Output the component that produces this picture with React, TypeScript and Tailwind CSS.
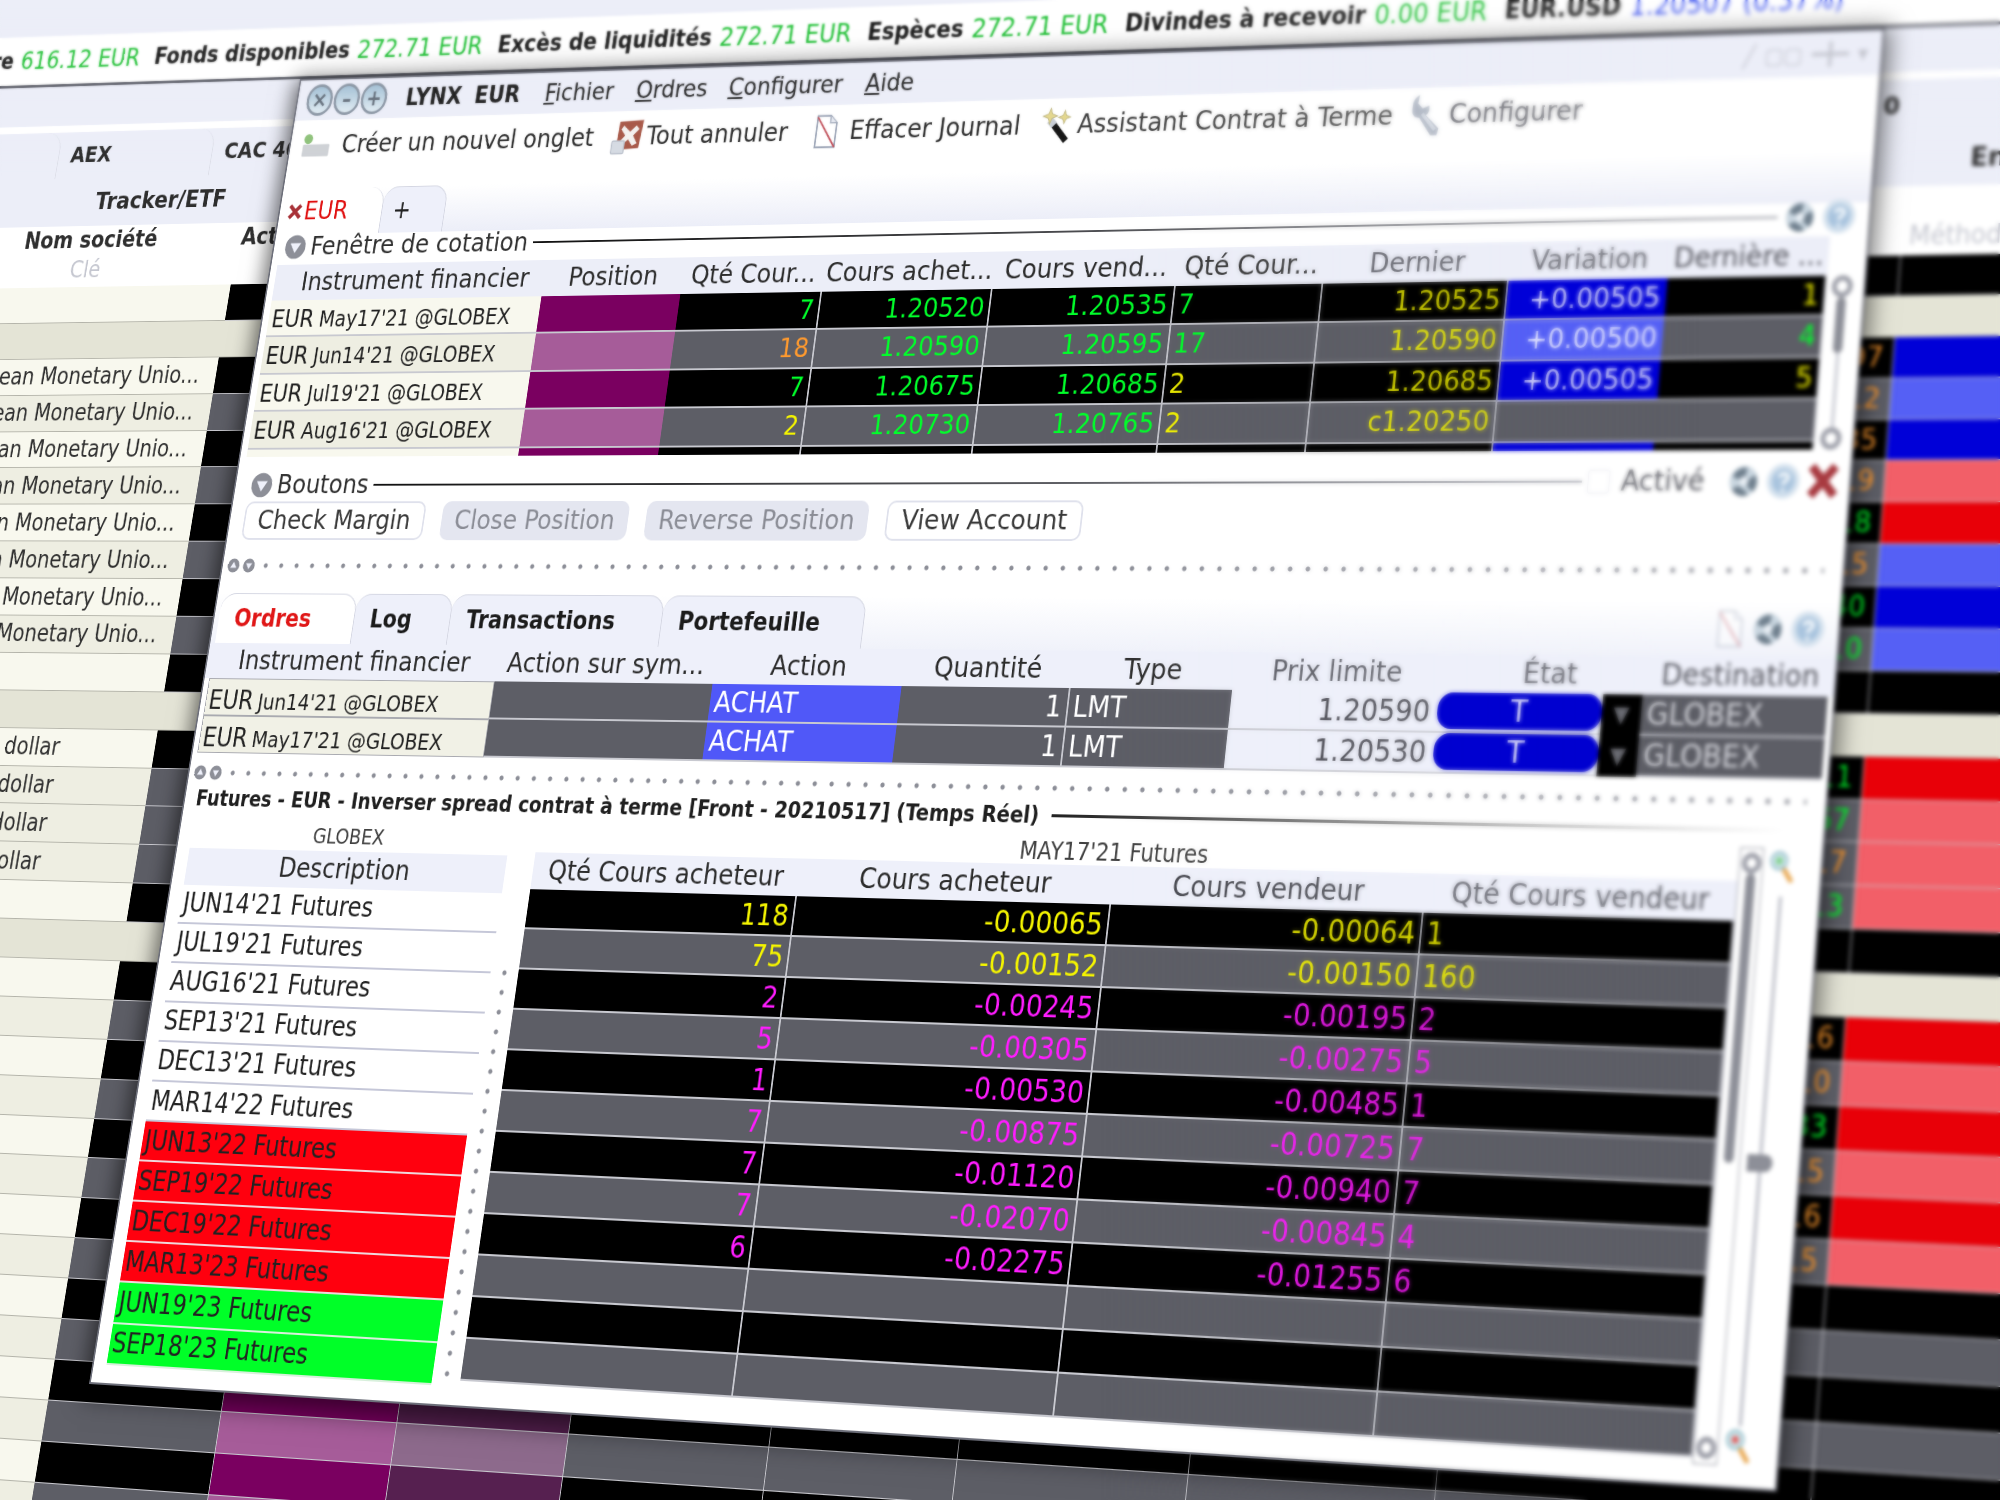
import type { ReactNode } from "react";

// the whole desktop sits on one tilted plane; these are the screen corners of the front window
const W = 1900;
const H = 1400;
const corners = [
  [300, 79],
  [1885, 28],
  [1777, 1492],
  [89, 1384],
];

function planeTransform() {
  const [[x0, y0], [x1, y1], [x2, y2], [x3, y3]] = corners;
  const dx1 = x1 - x2;
  const dx2 = x3 - x2;
  const sx = x0 - x1 + x2 - x3;
  const dy1 = y1 - y2;
  const dy2 = y3 - y2;
  const sy = y0 - y1 + y2 - y3;
  const det = dx1 * dy2 - dx2 * dy1;
  const g = (sx * dy2 - dx2 * sy) / det;
  const h = (dx1 * sy - sx * dy1) / det;
  const a = x1 - x0 + g * x1;
  const b = x3 - x0 + h * x3;
  const d = y1 - y0 + g * y1;
  const e = y3 - y0 + h * y3;
  return `matrix3d(${a / W},${d / W},0,${g / W},${b / H},${e / H},0,${h / H},0,0,1,0,${x0},${y0},0,1)`;
}

const GREEN = "text-[#00ff2a]";
const YELLOW = "text-[#f4f400]";
const ORANGE = "text-[#ff9a2e]";
const MAGENTA = "text-[#ff1cff]";
const WHITE = "text-white";

/* ---------- small drawings ---------- */

function Chevron({ small }: { small?: boolean }) {
  return (
    <svg viewBox="0 0 20 20" className={small ? "w-4 h-5" : "w-7 h-8"}>
      <circle cx="10" cy="10" r="9.5" fill="#8d8f98" />
      <path d="M5 7h10l-5 8z" fill="#eef0fa" />
    </svg>
  );
}

function ChevronUp() {
  return (
    <svg viewBox="0 0 20 20" className="w-4 h-5">
      <circle cx="10" cy="10" r="9.5" fill="#8d8f98" />
      <path d="M5 13h10l-5-8z" fill="#eef0fa" />
    </svg>
  );
}

function WinButton({ mark }: { mark: string }) {
  return (
    <div className="w-[34px] h-[36px] rounded-full bg-gradient-to-b from-[#a6c2d6] to-[#e0ebf2] border-[3px] border-[#8a95a3] flex items-center justify-center text-[#66707c] text-[24px] font-bold leading-none">
      {mark}
    </div>
  );
}

function Gear() {
  return (
    <svg viewBox="0 0 24 24" className="w-9 h-10">
      <circle cx="12" cy="12" r="10" fill="#c9d6e0" />
      <path d="M4 9a9 9 0 0 1 10-6l-1 6a4 4 0 0 0-4 2zM20 8a9 9 0 0 1-1 11l-5-4a4 4 0 0 0 1-4zM16 21a9 9 0 0 1-12-4l5-2a4 4 0 0 0 3 2z" fill="#70808e" />
      <circle cx="12" cy="12" r="3" fill="#e8eef4" />
    </svg>
  );
}

function HelpBall() {
  return (
    <svg viewBox="0 0 24 24" className="w-9 h-10">
      <circle cx="12" cy="12" r="11.5" fill="#d5e2ee" />
      <circle cx="12" cy="12" r="8" fill="#a9c4de" />
      <path d="M9 9.5c1-3 6.5-3 6.5 0 0 2.5-3.5 2-3.5 5" stroke="#f2f7fb" strokeWidth="2.4" fill="none" />
      <circle cx="12" cy="18" r="1.4" fill="#f2f7fb" />
    </svg>
  );
}

function DocStrike({ faint }: { faint?: boolean }) {
  return (
    <svg viewBox="0 0 24 28" className={`w-8 h-10 ${faint ? "opacity-40" : ""}`}>
      <path d="M3 1h12l6 6v20H3z" fill="#fff" stroke="#9aa3b5" strokeWidth="1.5" />
      <path d="M15 1v6h6" fill="#e8ebf2" stroke="#9aa3b5" strokeWidth="1" />
      <path d="M3 2l18 25" stroke="#c0505a" strokeWidth="1.5" />
    </svg>
  );
}

function CancelAll() {
  return (
    <svg viewBox="0 0 28 28" className="w-10 h-10">
      <path d="M6 2l21-1-2 22-20 1z" fill="#a85a4a" />
      <path d="M10 5l6 5 5-5 3 3-5 5 4 6-4 2-4-5-6 5-2-3 5-5-4-5z" fill="#f4f2f0" />
      <rect x="1" y="17" width="11" height="10" rx="1" fill="#d6dbe3" stroke="#b9bfca" />
    </svg>
  );
}

function NewTab() {
  return (
    <svg viewBox="0 0 32 24" className="w-10 h-8">
      <rect x="2" y="11" width="28" height="11" rx="1" fill="#cfd2d6" />
      <circle cx="7" cy="6" r="4.5" fill="#8fc27c" />
    </svg>
  );
}

function Wand() {
  return (
    <svg viewBox="0 0 28 28" className="w-10 h-11">
      <path d="M11 13l12 13" stroke="#161616" strokeWidth="5" />
      <path d="M8 10l4 4" stroke="#c9ced6" strokeWidth="6" />
      <path d="M8 1l1.6 4.4L14 7l-4.4 1.6L8 13 6.4 8.6 2 7l4.4-1.6zM20 3l1.4 3.6L25 8l-3.6 1.4L20 13l-1.4-3.6L15 8l3.6-1.4z" fill="#e5d88e" stroke="#b9b07a" strokeWidth="0.6" />
    </svg>
  );
}

function WrenchIcon() {
  return (
    <svg viewBox="0 0 28 32" className="w-10 h-12 shrink-0">
      <path d="M7 1l-1 6 4 4 5-2c1 4 0 6-2 7l11 10-1 5-5 0-10-13c-4 0-7-3-6-9 0-4 2-7 5-8z" fill="#b3bac6" />
      <path d="M10 15l11 12" stroke="#d9dee6" strokeWidth="2.5" />
    </svg>
  );
}

function Magnifier({ tint }: { tint: string }) {
  return (
    <svg viewBox="0 0 24 28" className="w-7 h-9 shrink-0">
      <path d="M13 15l8 11" stroke="#e8a64e" strokeWidth="4" />
      <circle cx="9" cy="9" r="7" fill="#cfe6ea" stroke="#9fc4cf" strokeWidth="2" />
      <circle cx="9" cy="9" r="3" fill={tint} />
    </svg>
  );
}

function Dots() {
  return <div className="flex-1 h-[8px] bg-[radial-gradient(circle,#8d8f98_2px,transparent_3px)] bg-[length:20px_8px]" />;
}

/* ---------- background window ---------- */

const bgRows: { tone: "black" | "gray" | "section"; label?: string; usd?: boolean; num?: string; numClass?: string; fill?: string }[] = [
  { tone: "black" },
  { tone: "section" },
  { tone: "black", label: "European Monetary Unio...", num: "97", numClass: ORANGE, fill: "bg-[#0000d8]" },
  { tone: "gray", label: "European Monetary Unio...", num: "12", numClass: ORANGE, fill: "bg-[#5560f5]" },
  { tone: "black", label: "European Monetary Unio...", num: "35", numClass: ORANGE, fill: "bg-[#0000d8]" },
  { tone: "gray", label: "European Monetary Unio...", num: "19", numClass: ORANGE, fill: "bg-[#f25f68]" },
  { tone: "black", label: "European Monetary Unio...", num: "18", numClass: GREEN, fill: "bg-[#e80008]" },
  { tone: "gray", label: "European Monetary Unio...", num: "15", numClass: ORANGE, fill: "bg-[#5560f5]" },
  { tone: "black", label: "European Monetary Unio...", num: "40", numClass: GREEN, fill: "bg-[#0000d8]" },
  { tone: "gray", label: "European Monetary Unio...", num: "10", numClass: GREEN, fill: "bg-[#5560f5]" },
  { tone: "black" },
  { tone: "section" },
  { tone: "black", label: "United States dollar", usd: true, num: "11", numClass: GREEN, fill: "bg-[#e80008]" },
  { tone: "gray", label: "United States dollar", usd: true, num: "67", numClass: GREEN, fill: "bg-[#f25f68]" },
  { tone: "gray", label: "United States dollar", usd: true, num: "17", numClass: ORANGE, fill: "bg-[#f25f68]" },
  { tone: "gray", label: "United States dollar", usd: true, num: "13", numClass: GREEN, fill: "bg-[#f25f68]" },
  { tone: "black" },
  { tone: "section" },
  { tone: "black", num: "16", numClass: ORANGE, fill: "bg-[#e80008]" },
  { tone: "gray", num: "10", numClass: ORANGE, fill: "bg-[#f25f68]" },
  { tone: "black", num: "33", numClass: GREEN, fill: "bg-[#e80008]" },
  { tone: "gray", num: "15", numClass: ORANGE, fill: "bg-[#f25f68]" },
  { tone: "black", num: "16", numClass: ORANGE, fill: "bg-[#e80008]" },
  { tone: "gray", num: "15", numClass: ORANGE, fill: "bg-[#f25f68]" },
  { tone: "black" },
  { tone: "gray" },
  { tone: "black" },
  { tone: "gray" },
  { tone: "black" },
  { tone: "gray" },
  { tone: "black" },
  { tone: "gray" },
];

function BgRow({ row }: { row: (typeof bgRows)[number] }) {
  if (row.tone === "section") {
    return <div className="h-[40.9px] bg-[#e4e4d6] border-b border-[#b8b8ae]" />;
  }
  const dark = row.tone === "black";
  const base = dark ? "bg-black" : "bg-[#5d5e66]";
  const cell = `h-full border-r border-b border-[#c9c9cf] ${base}`;
  return (
    <div className="h-[40.9px] flex">
      <div className={`w-[452px] h-full ${row.usd ? "pl-[69px]" : "pl-[84px]"} flex items-center text-[26px] whitespace-nowrap overflow-hidden text-[#303030] border-b border-[#b4b4aa] ${dark ? "bg-[#f8f8ee]" : "bg-[#eeeee2]"}`}>
        {row.label}
      </div>
      <div className={`w-[218px] ${cell}`} />
      <div className={`w-[215px] h-full border-r border-b border-[#c9c9cf] ${dark ? "bg-[#7a0060]" : "bg-[#a65c99]"}`} />
      <div className={`w-[205px] h-full border-r border-b border-[#c9c9cf] ${dark ? "bg-[#562050]" : "bg-[#8d6a8c]"}`} />
      <div className={`w-[233px] ${cell}`} />
      <div className={`w-[213px] ${cell}`} />
      <div className={`w-[254px] ${cell}`} />
      <div className={`w-[263px] ${cell}`} />
      <div className={`w-[382px] ${cell} flex items-center justify-end pr-[10px] text-[28px] ${row.numClass ?? ""}`}>{row.num}</div>
      <div className={`w-[700px] h-full border-b border-[#c9c9cf] ${row.fill ?? base}`} />
    </div>
  );
}

function StatusPair({ label, value, valueClass = "text-[#20c035]" }: { label: string; value: string; valueClass?: string }) {
  return (
    <div className="flex items-center gap-[10px] whitespace-nowrap">
      <span className="font-bold text-[26px] text-[#202020]">{label}</span>
      <span className={`text-[28px] ${valueClass}`}>{value}</span>
    </div>
  );
}

function BackgroundWindow() {
  return (
    <div className="absolute left-[-500px] top-[-260px] w-[3200px] bg-[#eceef8]">
      <div className="h-[200px]" />
      {/* account line */}
      <div className="h-[60px] bg-white flex items-center gap-[20px] pl-[33px] border-b-[3px] border-[#5a5c66]">
        <StatusPair label="Titre" value="616.12 EUR" />
        <StatusPair label="Fonds disponibles" value="272.71 EUR" />
        <StatusPair label="Excès de liquidités" value="272.71 EUR" />
        <StatusPair label="Espèces" value="272.71 EUR" />
        <StatusPair label="Divindes à recevoir" value="0.00 EUR" />
        <StatusPair label="EUR.USD" value="1.20507 (0.37%)" valueClass="text-[#3f55f0]" />
      </div>
      <div className="h-[46px] bg-[#eceef8]" />
      {/* tab rows */}
      <div className="h-[8px] bg-white" />
      <div className="h-[54px] flex text-[25px] font-bold text-[#2e2e2e] items-end">
        <div className="w-[189px] h-full border-r border-[#dcdee8] rounded-tr-[20px]" />
        <div className="w-[209px] h-full border-r border-[#dcdee8] rounded-tr-[20px] flex items-center pl-[16px]">AEX</div>
        <div className="w-[1450px] h-full flex items-center pl-[16px]">CAC 40</div>
        <div className="h-full flex items-center pl-[557px]">0</div>
      </div>
      <div className="h-[56px] flex text-[27px] font-bold text-[#2e2e2e] items-center border-b border-white">
        <div className="w-[250px]" />
        <div>Tracker/ETF</div>
        <div className="ml-[2074px]">En</div>
      </div>
      {/* column head */}
      <div className="h-[30px] bg-white flex items-center text-[26px] font-bold text-[#303030] whitespace-nowrap">
        <div className="w-[162px]" />
        <div className="w-[294px]">Nom société</div>
        <div>Act</div>
      </div>
      <div className="h-[39px] bg-white flex items-center text-[26px] text-[#c5c7d0]">
        <div className="w-[231px]" />
        <div className="w-[2211px]">Clé</div>
        <div>Méthode</div>
      </div>
      <div>
        {bgRows.map((row, i) => (
          <BgRow key={i} row={row} />
        ))}
      </div>
    </div>
  );
}

/* ---------- front window: quote table ---------- */

type QuoteCell = { text: string; color?: string };

const quotes: {
  name: [string, string];
  qty: QuoteCell;
  bid: string;
  ask: string;
  askQty: QuoteCell;
  last: string;
  change: string;
  lastQty: QuoteCell;
}[] = [
  { name: ["EUR", "May17'21 @GLOBEX"], qty: { text: "7", color: GREEN }, bid: "1.20520", ask: "1.20535", askQty: { text: "7", color: GREEN }, last: "1.20525", change: "+0.00505", lastQty: { text: "1", color: YELLOW } },
  { name: ["EUR", "Jun14'21 @GLOBEX"], qty: { text: "18", color: ORANGE }, bid: "1.20590", ask: "1.20595", askQty: { text: "17", color: GREEN }, last: "1.20590", change: "+0.00500", lastQty: { text: "4", color: GREEN } },
  { name: ["EUR", "Jul19'21 @GLOBEX"], qty: { text: "7", color: GREEN }, bid: "1.20675", ask: "1.20685", askQty: { text: "2", color: YELLOW }, last: "1.20685", change: "+0.00505", lastQty: { text: "5", color: YELLOW } },
  { name: ["EUR", "Aug16'21 @GLOBEX"], qty: { text: "2", color: YELLOW }, bid: "1.20730", ask: "1.20765", askQty: { text: "2", color: YELLOW }, last: "c1.20250", change: "", lastQty: { text: "" } },
  { name: ["EUR", "Sep13'21 @GLOBEX"], qty: { text: "5", color: YELLOW }, bid: "1.20810", ask: "1.20825", askQty: { text: "5", color: YELLOW }, last: "1.20830", change: "+0.00500", lastQty: { text: "1", color: YELLOW } },
];

function Cell({
  w,
  dark,
  right,
  className = "",
  children,
}: {
  w: string;
  dark: boolean;
  right?: boolean;
  className?: string;
  children?: ReactNode;
}) {
  return (
    <div
      className={`${w} h-full flex items-center px-[5px] border-r-2 border-b-2 border-[#c8c9d0] ${dark ? "bg-black" : "bg-[#5d5e66]"} ${right ? "justify-end" : ""} ${className}`}
    >
      {children}
    </div>
  );
}

function SectionHead({ title, children }: { title: string; children?: ReactNode }) {
  return (
    <div className="flex items-center gap-[6px] text-[29px] text-[#303030]">
      <Chevron />
      <span>{title}</span>
      <div className="flex-1 h-[2px] bg-gradient-to-r from-[#111] to-[#9a9ca6]" />
      {children}
    </div>
  );
}

function QuoteTable() {
  return (
    <div>
      <div className="h-[34px] pl-[14px] pr-[14px] flex items-center">
        <div className="flex-1 mt-[-6px]">
          <SectionHead title="Fenêtre de cotation">
            <Gear />
            <HelpBall />
          </SectionHead>
        </div>
      </div>
      <div className="flex pl-[8px]">
        <div className="w-[1848px]">
          <div className="h-[40px] flex items-center bg-[#eceef8] text-[29px] text-[#2c2c2c] text-center whitespace-nowrap">
            <div className="w-[350px] pl-[16px]">Instrument financier</div>
            <div className="w-[175px]">Position</div>
            <div className="w-[175px]">Qté Cour...</div>
            <div className="w-[206px]">Cours achet...</div>
            <div className="w-[216px]">Cours vend...</div>
            <div className="w-[170px]">Qté Cour...</div>
            <div className="w-[209px] text-[#55565e]">Dernier</div>
            <div className="w-[175px] text-[#55565e]">Variation</div>
            <div className="w-[172px] text-[#55565e]">Dernière ...</div>
          </div>
          <div className="h-[174px] overflow-hidden text-[29px]">
            {quotes.map((q, i) => {
              const dark = i % 2 === 0;
              return (
                <div key={i} className="h-[41.4px] flex">
                  <div className={`w-[350px] h-full flex items-baseline pt-[1px] gap-[7px] pl-[4px] text-[#222] border-b-2 border-[#c8c9d0] whitespace-nowrap ${dark ? "bg-[#f8f8ee]" : "bg-[#eeeee2]"}`}>
                    <span className="text-[27px]">{q.name[0]}</span>
                    <span className="text-[24px]">{q.name[1]}</span>
                  </div>
                  <div className={`w-[175px] h-full border-b-2 border-[#c8c9d0] ${dark ? "bg-[#7a0060]" : "bg-[#a65c99]"}`} />
                  <Cell w="w-[175px]" dark={dark} right className={q.qty.color}>{q.qty.text}</Cell>
                  <Cell w="w-[206px]" dark={dark} right className={GREEN}>{q.bid}</Cell>
                  <Cell w="w-[216px]" dark={dark} right className={GREEN}>{q.ask}</Cell>
                  <Cell w="w-[170px]" dark={dark} className={q.askQty.color}>{q.askQty.text}</Cell>
                  <Cell w="w-[209px]" dark={dark} right className={YELLOW}>{q.last}</Cell>
                  <div className={`w-[175px] h-full flex items-center justify-end pr-[6px] ${WHITE} border-b-2 border-[#c8c9d0] ${q.change === "" ? "bg-[#5d5e66]" : dark ? "bg-[#0000d8]" : "bg-[#5560f5]"}`}>
                    {q.change}
                  </div>
                  <Cell w="w-[172px]" dark={dark} right className={q.lastQty.color}>{q.lastQty.text}</Cell>
                </div>
              );
            })}
          </div>
        </div>
        <div className="w-[34px] flex flex-col items-center pt-[40px] h-[214px]">
          <div className="w-[22px] h-[22px] rounded-full border-[5px] border-[#9a9ca6]" />
          <div className="w-[10px] h-[56px] bg-[#8d8f98] rounded-full" />
          <div className="w-[3px] flex-1 bg-[#c5c7d0]" />
          <div className="w-[22px] h-[22px] rounded-full border-[5px] border-[#9a9ca6]" />
        </div>
      </div>
    </div>
  );
}

/* ---------- front window: orders ---------- */

const orders = [
  { name: "Jun14'21 @GLOBEX", price: "1.20590" },
  { name: "May17'21 @GLOBEX", price: "1.20530" },
];

function OrderTabs() {
  const tabs = [
    { label: "Ordres", w: "w-[175px]", active: true },
    { label: "Log", w: "w-[122px]" },
    { label: "Transactions", w: "w-[263px]" },
    { label: "Portefeuille", w: "w-[244px]" },
  ];
  return (
    <div className="h-[54px] flex pl-[6px] bg-gradient-to-b from-white to-[#f0f2fa] text-[26px] font-bold">
      {tabs.map((t) => (
        <div
          key={t.label}
          className={`${t.w} h-full flex items-center pl-[20px] rounded-t-[18px] border-t border-r border-[#d4d6e2] ${t.active ? "bg-white text-[#e01818]" : "bg-[#eef0fa] text-[#1c1c1c]"}`}
        >
          {t.label}
        </div>
      ))}
      <div className="flex-1 flex items-center justify-end gap-[6px] pr-[14px]">
        <DocStrike faint />
        <Gear />
        <HelpBall />
      </div>
    </div>
  );
}

function OrdersTable() {
  return (
    <div>
      <OrderTabs />
      <div className="h-[38px] flex items-center bg-[#eef0fa] text-[29px] text-[#2c2c2c] text-center pl-[6px] whitespace-nowrap">
        <div className="w-[364px]">Instrument financier</div>
        <div className="w-[268px]">Action sur sym...</div>
        <div className="w-[226px]">Action</div>
        <div className="w-[197px]">Quantité</div>
        <div className="w-[184px]">Type</div>
        <div className="w-[230px] text-[#55565e]">Prix limite</div>
        <div className="w-[178px] pl-[60px] text-[#55565e]">État</div>
        <div className="w-[237px] pl-[50px] text-[#55565e]">Destination</div>
      </div>
      {orders.map((o) => (
        <div key={o.name} className="h-[40px] flex pl-[6px] text-[30px] text-white">
          <div className="w-[364px] h-full flex items-baseline gap-[6px] pt-[2px] pl-[3px] bg-[#f1f1e6] text-[#222] border border-[#a9aab0] whitespace-nowrap">
            <span className="text-[28px]">EUR</span>
            <span className="text-[23.5px]">{o.name}</span>
          </div>
          <div className="w-[268px] h-full bg-[#5d5e66] border-b-2 border-[#c8c9d0]" />
          <div className="w-[226px] h-full flex items-center pl-[5px] bg-[#5058f8] border-b-2 border-[#c8c9d0]">ACHAT</div>
          <div className="w-[197px] h-full flex items-center justify-end pr-[6px] bg-[#5d5e66] border-r-2 border-b-2 border-[#c8c9d0]">1</div>
          <div className="w-[184px] h-full flex items-center pl-[5px] bg-[#5d5e66] border-b-2 border-[#c8c9d0]">LMT</div>
          <div className="w-[230px] h-full flex items-center justify-end pr-[8px] bg-[#eef0fa] text-[#404048] border-b-2 border-[#c8c9d0]">{o.price}</div>
          <div className="w-[178px] h-full bg-[#eef0fa] border-b-2 border-[#c8c9d0]">
            <div className="h-[36px] flex items-center justify-center bg-[#0000d0] rounded-[16px]">T</div>
          </div>
          <div className="w-[42px] h-full flex items-center justify-center bg-black text-[#6a6b72] text-[22px]">▼</div>
          <div className="w-[195px] h-full flex items-center pl-[6px] bg-[#5d5e66] text-[#d2d3d9] border-b-2 border-[#c8c9d0]">GLOBEX</div>
        </div>
      ))}
    </div>
  );
}

/* ---------- front window: spread matrix ---------- */

const months: { name: string; bg: string }[] = [
  { name: "JUN14'21 Futures", bg: "bg-white border-[#c5c7d8]" },
  { name: "JUL19'21 Futures", bg: "bg-white border-[#c5c7d8]" },
  { name: "AUG16'21 Futures", bg: "bg-white border-[#c5c7d8]" },
  { name: "SEP13'21 Futures", bg: "bg-white border-[#c5c7d8]" },
  { name: "DEC13'21 Futures", bg: "bg-white border-[#c5c7d8]" },
  { name: "MAR14'22 Futures", bg: "bg-white border-[#c5c7d8]" },
  { name: "JUN13'22 Futures", bg: "bg-[#ff000e] border-[#f0d8dc]" },
  { name: "SEP19'22 Futures", bg: "bg-[#ff000e] border-[#f0d8dc]" },
  { name: "DEC19'22 Futures", bg: "bg-[#ff000e] border-[#f0d8dc]" },
  { name: "MAR13'23 Futures", bg: "bg-[#ff000e] border-[#f0d8dc]" },
  { name: "JUN19'23 Futures", bg: "bg-[#00ff28] border-[#d8f0dc]" },
  { name: "SEP18'23 Futures", bg: "bg-[#00ff28] border-[#d8f0dc]" },
];

const spreads: string[][] = [
  ["118", "-0.00065", "-0.00064", "1"],
  ["75", "-0.00152", "-0.00150", "160"],
  ["2", "-0.00245", "-0.00195", "2"],
  ["5", "-0.00305", "-0.00275", "5"],
  ["1", "-0.00530", "-0.00485", "1"],
  ["7", "-0.00875", "-0.00725", "7"],
  ["7", "-0.01120", "-0.00940", "7"],
  ["7", "-0.02070", "-0.00845", "4"],
  ["6", "-0.02275", "-0.01255", "6"],
  ["", "", "", ""],
  ["", "", "", ""],
  ["", "", "", ""],
];

function SpreadMatrix() {
  return (
    <div>
      <div className="h-[30px] flex items-center gap-[14px] pl-[14px] text-[22.6px] font-bold text-[#202020] whitespace-nowrap">
        <span>Futures - EUR - Inverser spread contrat à terme [Front - 20210517] (Temps Réel)</span>
        <div className="flex-1 h-[3px] mr-[40px] bg-gradient-to-r from-[#222] via-[#888] to-white" />
      </div>
      <div className="flex pl-[16px] mt-[7px]">
        {/* month list */}
        <div className="w-[401px]">
          <div className="h-[30px] flex items-center pl-[155px] text-[22px] text-[#404040]">GLOBEX</div>
          <div className="h-[39px] flex items-center justify-center bg-[#eef0fa] text-[29px] text-[#2c2c2c]">Description</div>
          {months.map((m) => (
            <div key={m.name} className={`h-[41.1px] flex items-center pl-[3px] border-b-2 text-[28px] text-[#222] whitespace-nowrap ${m.bg}`}>
              {m.name}
            </div>
          ))}
        </div>
        {/* splitter */}
        <div className="w-[34px] pt-[140px] flex justify-center">
          <div className="w-[8px] h-[420px] bg-[radial-gradient(circle,#8d8f98_2px,transparent_3px)] bg-[length:8px_20px]" />
        </div>
        {/* matrix */}
        <div className="w-[1360px]">
          <div className="h-[26px] flex items-center justify-center text-[24px] text-[#404040]">MAY17'21 Futures</div>
          <div className="h-[38px] flex items-center bg-[#eef0fa] text-[29px] text-[#2c2c2c] text-center whitespace-nowrap">
            <div className="w-[321px]">Qté Cours acheteur</div>
            <div className="w-[363px]">Cours acheteur</div>
            <div className="w-[346px] text-[#44454c]">Cours vendeur</div>
            <div className="w-[330px] text-[#55565e]">Qté Cours vendeur</div>
          </div>
          {spreads.map((row, i) => {
            const dark = i % 2 === 0;
            const color = i < 2 ? YELLOW : MAGENTA;
            return (
              <div key={i} className={`h-[41px] flex text-[30px] ${color}`}>
                <Cell w="w-[321px]" dark={dark} right>{row[0]}</Cell>
                <Cell w="w-[363px]" dark={dark} right>{row[1]}</Cell>
                <Cell w="w-[346px]" dark={dark} right>{row[2]}</Cell>
                <Cell w="w-[330px]" dark={dark}>{row[3]}</Cell>
              </div>
            );
          })}
        </div>
        {/* scroll + zoom strip */}
        <div className="w-[25px] mt-[-6px] border border-[#9a9ca6] flex flex-col items-center">
          <div className="w-[20px] h-[20px] mt-[4px] rounded-full border-[5px] border-[#9a9ca6]" />
          <div className="w-[10px] h-[270px] bg-[#8d8f98] rounded-full" />
          <div className="flex-1" />
          <div className="w-[20px] h-[20px] mb-[4px] rounded-full border-[5px] border-[#9a9ca6]" />
        </div>
        <div className="w-[40px] mt-[-6px] flex flex-col items-center">
          <Magnifier tint="#7fd08a" />
          <div className="w-[3px] h-[240px] mt-[10px] bg-[#b8bac4]" />
          <div className="w-[26px] h-[16px] bg-[#8d8f98] rounded-r-full" />
          <div className="w-[3px] flex-1 bg-[#b8bac4]" />
          <Magnifier tint="#e06060" />
        </div>
      </div>
    </div>
  );
}

/* ---------- front window ---------- */

function FrontWindow() {
  return (
    <div className="absolute left-0 top-0 w-[1900px] h-[1400px] bg-white border-2 border-[#6d6f7a] shadow-[0_6px_24px_6px_rgba(0,0,0,0.55)] overflow-hidden text-[#222]">
      {/* title bar */}
      <div className="h-[46px] bg-[#eceef8] flex items-center text-[27px] whitespace-nowrap">
        <div className="flex gap-[2px] pl-[12px] w-[143px]">
          <WinButton mark="×" />
          <WinButton mark="–" />
          <WinButton mark="+" />
        </div>
        <span className="font-bold text-[26px] w-[90px]">LYNX</span>
        <span className="font-bold text-[26px] w-[91px]">EUR</span>
        <span className="w-[117px]"><u>F</u>ichier</span>
        <span className="w-[117px]"><u>O</u>rdres</span>
        <span className="w-[170px]"><u>C</u>onfigurer</span>
        <span><u>A</u>ide</span>
        <div className="flex-1 flex justify-end items-center gap-[10px] pr-[14px] text-[#c3c5ce] text-[22px]">
          <span>╱</span>
          <span>▢▢</span>
          <span>━╋━</span>
          <span>▾</span>
        </div>
      </div>
      {/* toolbar */}
      <div className="h-[58px] bg-white flex items-center text-[28.5px] text-[#2a2a2a] whitespace-nowrap">
        <div className="w-[418px] pl-[14px] flex items-center gap-[14px]"><NewTab /><span>Créer un nouvel onglet</span></div>
        <div className="w-[253px] flex items-center gap-[4px]"><CancelAll /><span>Tout annuler</span></div>
        <div className="w-[276px] flex items-center gap-[13px]"><DocStrike /><span>Effacer Journal</span></div>
        <div className="w-[432px] flex items-center gap-[5px]"><Wand /><span className="text-[#3a3a3a]">Assistant Contrat à Terme</span></div>
        <div className="flex items-center gap-[5px] text-[#55565e]"><WrenchIcon /><span>Configurer</span></div>
      </div>
      <div className="h-[20px] bg-white" />
      {/* workspace tabs */}
      <div className="h-[52px] flex bg-gradient-to-b from-white to-[#eceef8] text-[28px]">
        <div className="w-[135px] h-full flex items-center gap-[2px] pl-[10px] bg-white rounded-tr-[18px] border-r border-[#d4d6e2] text-[#e01010]">
          <svg viewBox="0 0 20 20" className="w-[20px] h-[24px]">
            <path d="M3 3l14 14M17 3L3 17" stroke="#a83238" strokeWidth="4.5" />
          </svg>
          EUR
        </div>
        <div className="w-[82px] h-full flex items-center pl-[14px] rounded-t-[18px] border-t border-r border-[#d4d6e2] bg-[#eef0fa]">+</div>
      </div>
      <QuoteTable />
      {/* buttons pane */}
      <div className="pt-[9px] pr-[10px] pl-[20px]">
        <SectionHead title="Boutons">
          <div className="w-[24px] h-[24px] border border-[#e5e6ee] rounded-[3px]" />
          <span className="text-[#55565e] ml-[6px] mr-[18px]">Activé</span>
          <Gear />
          <HelpBall />
          <svg viewBox="0 0 20 20" className="w-9 h-10">
            <path d="M3 2l14 16M17 2L3 18" stroke="#a83a40" strokeWidth="5" />
          </svg>
        </SectionHead>
      </div>
      <div className="flex gap-[22px] pl-[18px] mt-[-4px] text-[29px] whitespace-nowrap">
        <div className="h-[42px] px-[16px] flex items-center bg-white border-2 border-[#dfe1ec] rounded-[10px] text-[#3a3a3a]">Check Margin</div>
        <div className="h-[42px] px-[16px] flex items-center bg-[#e4e6f0] rounded-[10px] text-[#8b8d96]">Close Position</div>
        <div className="h-[42px] px-[16px] flex items-center bg-[#e4e6f0] rounded-[10px] text-[#8b8d96]">Reverse Position</div>
        <div className="h-[42px] px-[16px] flex items-center bg-white border-2 border-[#dfe1ec] rounded-[10px] text-[#3a3a3a]">View Account</div>
      </div>
      <div className="h-[32px] mt-[12px] mb-[14px] flex items-center gap-[4px] pl-[6px] pr-[20px]">
        <ChevronUp />
        <Chevron small />
        <Dots />
      </div>
      <OrdersTable />
      <div className="h-[26px] mt-[8px] flex items-center gap-[4px] pl-[6px] pr-[20px]">
        <ChevronUp />
        <Chevron small />
        <Dots />
      </div>
      <SpreadMatrix />
    </div>
  );
}

export default function App() {
  return (
    <div className="relative w-[2000px] h-[1500px] overflow-hidden bg-[#eceef8] font-['DejaVu_Sans',sans-serif]">
      <div className="absolute left-0 top-0 w-[1900px] h-[1400px] origin-top-left" style={{ transform: planeTransform() }}>
        <BackgroundWindow />
        <FrontWindow />
      </div>
      {/* depth of field: far right and top edges go soft */}
      <div className="absolute inset-0 backdrop-blur-[2px] [mask-image:linear-gradient(to_right,transparent_55%,black_85%)]" />
      <div className="absolute inset-0 backdrop-blur-[1px] [mask-image:linear-gradient(to_bottom,black_0%,transparent_12%)]" />
    </div>
  );
}
